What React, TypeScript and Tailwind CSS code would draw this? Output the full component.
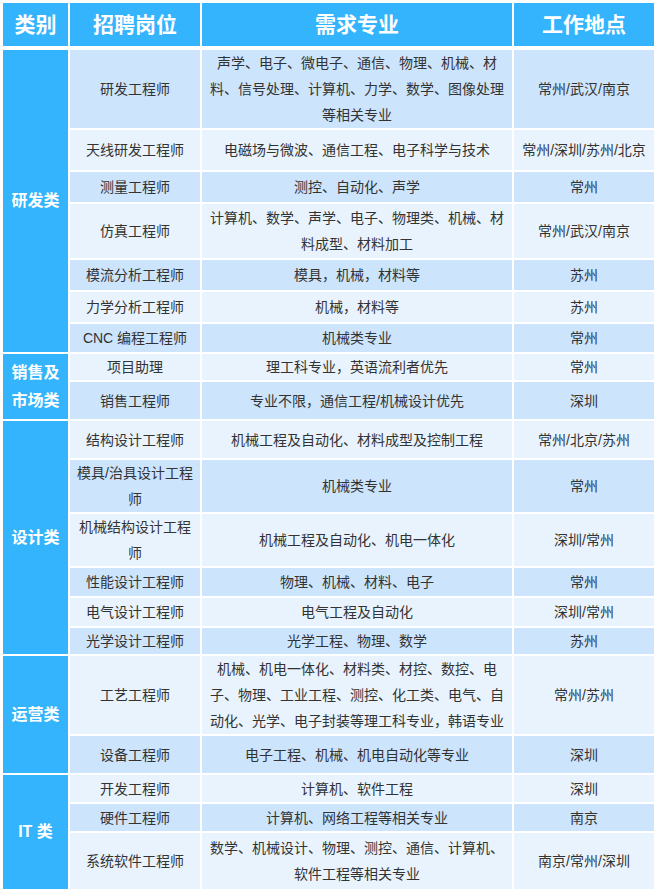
const rows = [
  { pos: "研发工程师", major: "声学、电子、微电子、通信、物理、机械、材料、信号处理、计算机、力学、数学、图像处理等相关专业", loc: "常州/武汉/南京", h: "h-[78px]" },
  { pos: "天线研发工程师", major: "电磁场与微波、通信工程、电子科学与技术", loc: "常州/深圳/苏州/北京", h: "h-[40px]" },
  { pos: "测量工程师", major: "测控、自动化、声学", loc: "常州", h: "h-[30px]" },
  { pos: "仿真工程师", major: "计算机、数学、声学、电子、物理类、机械、材料成型、材料加工", loc: "常州/武汉/南京", h: "h-[54px]" },
  { pos: "模流分析工程师", major: "模具，机械，材料等", loc: "苏州", h: "h-[30px]" },
  { pos: "力学分析工程师", major: "机械，材料等", loc: "苏州", h: "h-[30px]" },
  { pos: "CNC 编程工程师", major: "机械类专业", loc: "常州", h: "h-[28px]" },
  { pos: "项目助理", major: "理工科专业，英语流利者优先", loc: "常州", h: "h-[26px]" },
  { pos: "销售工程师", major: "专业不限，通信工程/机械设计优先", loc: "深圳", h: "h-[37px]" },
  { pos: "结构设计工程师", major: "机械工程及自动化、材料成型及控制工程", loc: "常州/北京/苏州", h: "h-[37px]" },
  { pos: "模具/治具设计工程师", major: "机械类专业", loc: "常州", h: "h-[52px]" },
  { pos: "机械结构设计工程师", major: "机械工程及自动化、机电一体化", loc: "深圳/常州", h: "h-[52px]" },
  { pos: "性能设计工程师", major: "物理、机械、材料、电子", loc: "常州", h: "h-[28px]" },
  { pos: "电气设计工程师", major: "电气工程及自动化", loc: "深圳/常州", h: "h-[28px]" },
  { pos: "光学设计工程师", major: "光学工程、物理、数学", loc: "苏州", h: "h-[26px]" },
  { pos: "工艺工程师", major: "机械、机电一体化、材料类、材控、数控、电子、物理、工业工程、测控、化工类、电气、自动化、光学、电子封装等理工科专业，韩语专业", loc: "常州/苏州", h: "h-[78px]" },
  { pos: "设备工程师", major: "电子工程、机械、机电自动化等专业", loc: "深圳", h: "h-[37px]" },
  { pos: "开发工程师", major: "计算机、软件工程", loc: "深圳", h: "h-[27px]" },
  { pos: "硬件工程师", major: "计算机、网络工程等相关专业", loc: "南京", h: "h-[27px]" },
  { pos: "系统软件工程师", major: "数学、机械设计、物理、测控、通信、计算机、软件工程等相关专业", loc: "南京/常州/深圳", h: "h-[56px]" },
];

// category cell sits before the first row of its group
const groups: Record<number, { label: React.ReactNode; span: string }> = {
  0: { label: "研发类", span: "row-span-7" },
  7: { label: <>销售及<br />市场类</>, span: "row-span-2" },
  9: { label: "设计类", span: "row-span-6" },
  15: { label: "运营类", span: "row-span-2" },
  17: { label: "IT 类", span: "row-span-3" },
};

const headers = ["类别", "招聘岗位", "需求专业", "工作地点"];

export default function App() {
  return (
    <div
      className="w-[656px] h-[889px] overflow-hidden bg-white pl-[3px] pt-[3px]"
      style={{ fontFamily: '"Liberation Sans", "Noto Sans CJK SC", sans-serif' }}
    >
      <div className="grid grid-cols-[65px_130px_310px_140px] gap-[2px]">
        {headers.map((h) => (
          <div
            key={h}
            className="h-[43px] mb-[2px] bg-[#33b4fc] flex items-center justify-center text-white text-[21px] font-bold"
          >
            {h}
          </div>
        ))}

        {rows.map((r, i) => {
          const bg = i % 2 === 0 ? "bg-[#cde4fd]" : "bg-[#e8f3fe]";
          const g = groups[i];
          return [
            g && (
              <div
                key={"g" + i}
                className={`col-start-1 ${g.span} bg-[#33b4fc] flex items-center justify-center text-center text-white text-[16px] font-bold leading-[28px] px-1`}
              >
                {g.label}
              </div>
            ),
            <div
              key={"p" + i}
              className={`col-start-2 ${r.h} ${bg} flex items-center justify-center text-center px-[5px] text-[14px] leading-[26px] text-[#333]`}
            >
              {r.pos}
            </div>,
            <div
              key={"m" + i}
              className={`${bg} flex items-center justify-center text-center px-[4px] text-[14px] leading-[26px] text-[#333]`}
            >
              {r.major}
            </div>,
            <div
              key={"l" + i}
              className={`${bg} flex items-center justify-center text-center px-1 text-[14px] leading-[26px] text-[#333]`}
            >
              {r.loc}
            </div>,
          ];
        })}
      </div>
    </div>
  );
}
